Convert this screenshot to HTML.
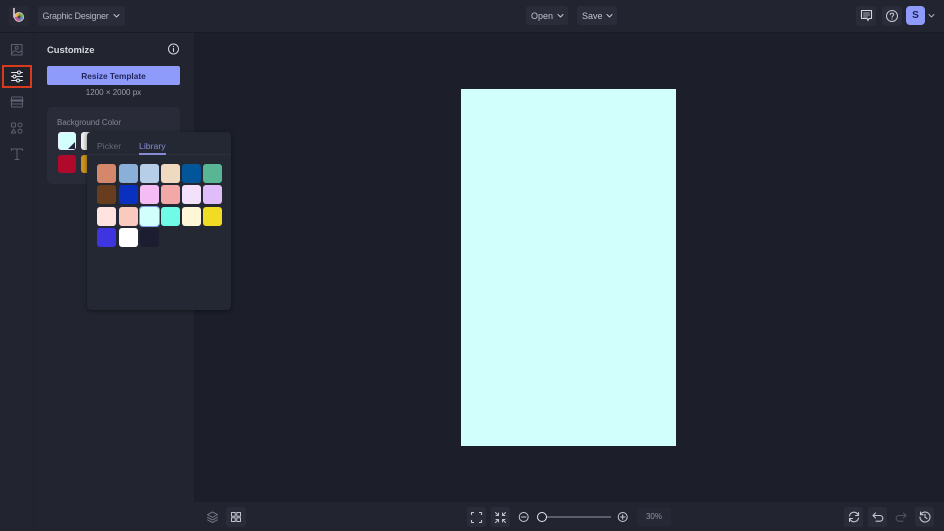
<!DOCTYPE html>
<html>
<head>
<meta charset="utf-8">
<style>
*{box-sizing:border-box;margin:0;padding:0}
html,body{width:944px;height:531px;overflow:hidden;background:#1c1e29;font-family:"Liberation Sans",sans-serif;color:#c9ccd6}
.a{position:absolute}
svg{position:absolute;fill:none;stroke-linecap:round;stroke-linejoin:round}
.btn{position:absolute;background:#2a2d39;border-radius:3px}
.s{position:absolute;width:19px;height:19px;border-radius:3px}
.t{position:absolute;white-space:nowrap}
</style>
</head>
<body>
<!-- top bar -->
<div class="a" style="left:0;top:0;width:944px;height:32px;background:#22252f"></div>
<div class="a" style="left:0;top:32px;width:944px;height:1px;background:#1a1c25"></div>
<!-- left rail -->
<div class="a" style="left:0;top:33px;width:33px;height:498px;background:#22252f"></div>
<div class="a" style="left:33px;top:33px;width:1px;height:498px;background:#1e212a"></div>
<!-- panel -->
<div class="a" style="left:34px;top:33px;width:160px;height:498px;background:#22252f"></div>
<!-- bottom bar -->
<div class="a" style="left:194px;top:502px;width:750px;height:29px;background:#22252f"></div>

<!-- logo -->
<div class="btn" style="left:9px;top:6px;width:20px;height:20px;background:#272a35"></div>
<svg style="left:9px;top:6px" width="20" height="20" viewBox="0 0 20 20">
<path d="M5 2.5V11" stroke="#e8e2e6" stroke-width="1.5"/>
<circle cx="10" cy="11" r="5" fill="#d9c3cf"/>
<circle cx="10" cy="11" r="4" fill="#e3b53d"/>
<path d="M10 11 L10 7 A4 4 0 0 1 14 11Z" fill="#6fae4d"/>
<path d="M10 11 L14 11 A4 4 0 0 1 10 15Z" fill="#5a8fc9"/>
<path d="M10 11 L10 15 A4 4 0 0 1 6 11Z" fill="#c65a9a"/>
<circle cx="10" cy="11" r="1.5" fill="#4a4048"/>
</svg>

<!-- Graphic Designer -->
<div class="btn" style="left:38px;top:6px;width:87px;height:20px"></div>
<div class="t" style="left:42.5px;top:10px;font-size:9px;letter-spacing:-.25px;line-height:12px;color:#b4b7c2">Graphic Designer</div>
<svg style="left:112px;top:13px" width="9" height="6" viewBox="0 0 9 6"><path d="M2 1.5L4.5 4L7 1.5" stroke="#c5c8d2" stroke-width="1"/></svg>

<!-- Open/Save -->
<div class="btn" style="left:526px;top:6px;width:42px;height:19px"></div>
<div class="t" style="left:531px;top:10px;font-size:9px;line-height:12px;color:#bfc2cc">Open</div>
<svg style="left:556px;top:13px" width="9" height="6" viewBox="0 0 9 6"><path d="M2 1.5L4.5 4L7 1.5" stroke="#c5c8d2" stroke-width="1"/></svg>
<div class="btn" style="left:577px;top:6px;width:40px;height:19px"></div>
<div class="t" style="left:582px;top:10px;font-size:9px;line-height:12px;color:#bfc2cc">Save</div>
<svg style="left:605px;top:13px" width="9" height="6" viewBox="0 0 9 6"><path d="M2 1.5L4.5 4L7 1.5" stroke="#c5c8d2" stroke-width="1"/></svg>

<!-- top right -->
<div class="btn" style="left:856px;top:6px;width:20px;height:20px"></div>
<svg style="left:860px;top:9px" width="13" height="13" viewBox="0 0 13 13"><path d="M1.5 1.5H11.5V9.5H9L8 11.5L7 9.5H1.5Z" stroke="#d5d7df" stroke-width="1.1"/><path d="M3.5 4H9.5M3.5 6H9.5M3.5 8H7.5" stroke="#d5d7df" stroke-width=".8"/></svg>
<div class="btn" style="left:882px;top:6px;width:20px;height:20px"></div>
<svg style="left:885px;top:9px" width="14" height="14" viewBox="0 0 14 14"><circle cx="7" cy="7" r="5.5" stroke="#c9ccd6" stroke-width="1"/><path d="M5.3 5.6C5.3 3.6 8.7 3.6 8.7 5.6C8.7 7 7 6.8 7 8.2" stroke="#c9ccd6" stroke-width="1"/><circle cx="7" cy="10" r=".6" fill="#c9ccd6"/></svg>
<div class="a" style="left:906px;top:6px;width:19px;height:19px;background:#8e9bfb;border-radius:4px"></div>
<div class="t" style="left:906px;top:9px;width:19px;text-align:center;font-size:10px;line-height:13px;font-weight:bold;color:#1d2150">S</div>
<svg style="left:927px;top:13px" width="9" height="6" viewBox="0 0 9 6"><path d="M2 1.5L4.5 4L7 1.5" stroke="#aeb1bd" stroke-width="1"/></svg>

<!-- rail icons -->
<svg style="left:9px;top:43px" width="15" height="14" viewBox="0 0 15 14"><rect x="2.5" y="1.5" width="10.5" height="10.5" stroke="#5c6070" stroke-width="1"/><circle cx="7.7" cy="4.8" r="1.5" stroke="#5c6070"/><path d="M3 10L6 7.5L9.5 9.5L12.5 8" stroke="#5c6070"/></svg>
<div class="a" style="left:2px;top:65px;width:30px;height:23px;border:2.5px solid #d93a1e;background:#1f222b"></div>
<svg style="left:9px;top:69px" width="16" height="15" viewBox="0 0 16 15"><path d="M2.5 3.5H13.5M2.5 7.5H13.5M2.5 11.5H13.5" stroke="#e4e5ea" stroke-width="1"/><circle cx="10" cy="3.5" r="1.5" fill="#1f222b" stroke="#e4e5ea"/><circle cx="5.5" cy="7.5" r="1.5" fill="#1f222b" stroke="#e4e5ea"/><circle cx="9" cy="11.5" r="1.5" fill="#1f222b" stroke="#e4e5ea"/></svg>
<svg style="left:9px;top:95px" width="15" height="14" viewBox="0 0 15 14"><rect x="2.5" y="2" width="11" height="10" rx=".5" stroke="#5c6070" stroke-width="1"/><path d="M2.5 5.5H13.5" stroke="#5c6070" stroke-width="2.2"/><path d="M2.5 9H13.5" stroke="#5c6070" stroke-width="1"/></svg>
<svg style="left:9px;top:121px" width="15" height="14" viewBox="0 0 15 14"><rect x="2.5" y="2" width="4" height="4" rx=".7" stroke="#5c6070"/><circle cx="11" cy="4" r="2" stroke="#5c6070"/><path d="M4.5 8L6.8 12H2.2Z" stroke="#5c6070"/><circle cx="11" cy="10.2" r="2" stroke="#5c6070"/></svg>
<svg style="left:9px;top:147px" width="15" height="14" viewBox="0 0 15 14"><path d="M2.5 3.5V2H13.5V3.5M8 2V12.5M6 12.5H10" stroke="#5c6070" stroke-width="1"/></svg>

<!-- panel content -->
<div class="t" style="left:47px;top:43px;font-size:9.4px;line-height:13px;font-weight:bold;color:#d6d8df">Customize</div>
<svg style="left:167px;top:43px" width="13" height="13" viewBox="0 0 13 13"><circle cx="6.5" cy="6" r="5" stroke="#d5d7df"/><path d="M6.5 5.5V8.5" stroke="#d5d7df" stroke-width="1.1"/><circle cx="6.5" cy="3.6" r=".6" fill="#d5d7df"/></svg>
<div class="a" style="left:47px;top:66px;width:133px;height:19px;background:#8e9bfb;border-radius:2px"></div>
<div class="t" style="left:47px;top:69.5px;width:133px;text-align:center;font-size:8.3px;line-height:12px;font-weight:bold;color:#23275c">Resize Template</div>
<div class="t" style="left:47px;top:86.5px;width:133px;text-align:center;font-size:8px;line-height:12px;color:#9c9fab">1200 × 2000 px</div>

<div class="a" style="left:47px;top:107px;width:133px;height:77px;background:#292c38;border-radius:5px"></div>
<div class="t" style="left:57px;top:117px;font-size:8px;line-height:11px;color:#858897">Background Color</div>
<div class="s" style="left:58px;top:132px;width:18px;height:18px;background:#d1fffb;border:1px solid #eef"></div>
<svg style="left:66px;top:140px" width="10" height="10" viewBox="0 0 10 10"><path d="M9 2V9H2Z" fill="#23263a"/></svg>
<div class="s" style="left:81px;top:132px;height:18px;background:linear-gradient(90deg,#f2f2f2,#b8b8bc)"></div>
<div class="s" style="left:58px;top:155px;width:18px;height:18px;background:#b0092c"></div>
<div class="s" style="left:81px;top:155px;height:18px;background:#cd931f"></div>

<!-- popup -->
<div class="a" style="left:87px;top:132px;width:144px;height:178px;background:#242833;border-radius:4px;box-shadow:0 1px 4px rgba(0,0,0,.45)"></div>
<div class="a" style="left:87px;top:154px;width:144px;height:1px;background:#2c303b"></div>
<div class="t" style="left:97px;top:140px;font-size:8.7px;line-height:12px;color:#666979">Picker</div>
<div class="t" style="left:139px;top:140px;font-size:8.7px;line-height:12px;color:#858cd4">Library</div>
<div class="a" style="left:139px;top:153px;width:27px;height:1.5px;background:#858cd4"></div>

<div class="s" style="left:97px;top:164px;background:#d5876c"></div>
<div class="s" style="left:118.5px;top:164px;background:#8aafd9"></div>
<div class="s" style="left:140px;top:164px;background:#b6cee8"></div>
<div class="s" style="left:161px;top:164px;background:#efdabf"></div>
<div class="s" style="left:182px;top:164px;background:#03559a"></div>
<div class="s" style="left:203px;top:164px;background:#58b694"></div>

<div class="s" style="left:97px;top:185px;background:#673d1e"></div>
<div class="s" style="left:118.5px;top:185px;background:#0a30c0"></div>
<div class="s" style="left:140px;top:185px;background:#f5bbf5"></div>
<div class="s" style="left:161px;top:185px;background:#f3a8a8"></div>
<div class="s" style="left:182px;top:185px;background:#f3e0fb"></div>
<div class="s" style="left:203px;top:185px;background:#e0bcf9"></div>

<div class="s" style="left:97px;top:207px;background:#ffe3e0"></div>
<div class="s" style="left:118.5px;top:207px;background:#fbcabf"></div>
<div class="s" style="left:140px;top:207px;background:#d1fffb;box-shadow:0 0 0 1px #7f9ae0"></div>
<div class="s" style="left:161px;top:207px;background:#6ffbe6"></div>
<div class="s" style="left:182px;top:207px;background:#fff6d8"></div>
<div class="s" style="left:203px;top:207px;background:#f0dc22"></div>

<div class="s" style="left:97px;top:228px;background:#3e35e0"></div>
<div class="s" style="left:118.5px;top:228px;background:#ffffff"></div>
<div class="s" style="left:140px;top:228px;background:#1c1d30"></div>

<!-- canvas -->
<div class="a" style="left:461px;top:89px;width:215px;height:357px;background:#d1fffb"></div>

<!-- bottom left -->
<svg style="left:205px;top:510px" width="15" height="15" viewBox="0 0 15 15"><path d="M7.5 2L12.5 4.7L7.5 7.4L2.5 4.7Z" stroke="#6f7383"/><path d="M2.5 7.3L7.5 10L12.5 7.3M2.5 9.8L7.5 12.5L12.5 9.8" stroke="#6f7383"/></svg>
<div class="btn" style="left:226px;top:507px;width:20px;height:20px"></div>
<svg style="left:229px;top:510px" width="14" height="14" viewBox="0 0 14 14"><rect x="2.5" y="2.5" width="3.7" height="3.7" stroke="#c4c6cf"/><rect x="7.8" y="2.5" width="3.7" height="3.7" stroke="#c4c6cf"/><rect x="2.5" y="7.8" width="3.7" height="3.7" stroke="#c4c6cf"/><rect x="7.8" y="7.8" width="3.7" height="3.7" stroke="#c4c6cf"/></svg>

<!-- bottom center -->
<div class="btn" style="left:467px;top:507px;width:19px;height:20px"></div>
<svg style="left:470px;top:511px" width="13" height="13" viewBox="0 0 13 13"><path d="M1.5 4V1.5H4M9 1.5H11.5V4M11.5 9V11.5H9M4 11.5H1.5V9" stroke="#c4c6cf" stroke-width="1.1" stroke-linecap="butt"/></svg>
<div class="btn" style="left:491px;top:507px;width:19px;height:20px"></div>
<svg style="left:494px;top:511px" width="13" height="13" viewBox="0 0 13 13"><path d="M1.5 1.5L4.5 4.5M4.5 2V4.5H2M11.5 1.5L8.5 4.5M8.5 2V4.5H11M1.5 11.5L4.5 8.5M4.5 11V8.5H2M11.5 11.5L8.5 8.5M8.5 11V8.5H11" stroke="#c4c6cf"/></svg>
<svg style="left:517px;top:510px" width="14" height="14" viewBox="0 0 14 14"><circle cx="6.7" cy="7" r="4.5" stroke="#c9ccd6"/><path d="M4.5 7H9" stroke="#c9ccd6"/></svg>
<div class="a" style="left:537px;top:516px;width:74px;height:1.5px;background:#5a5e6c"></div>
<div class="a" style="left:537px;top:512px;width:10px;height:10px;border:1.5px solid #e8e9ee;border-radius:50%;background:#22252f"></div>
<svg style="left:616px;top:510px" width="14" height="14" viewBox="0 0 14 14"><circle cx="6.7" cy="7" r="4.5" stroke="#c9ccd6"/><path d="M4.5 7H9M6.7 4.7V9.3" stroke="#c9ccd6"/></svg>
<div class="a" style="left:637px;top:508px;width:34px;height:18px;background:#262935;border-radius:2px"></div>
<div class="t" style="left:637px;top:512px;width:34px;text-align:center;font-size:8px;line-height:10px;color:#8f92a0">30%</div>

<!-- bottom right -->
<div class="btn" style="left:844px;top:507px;width:19px;height:20px"></div>
<svg style="left:847px;top:510px" width="14" height="14" viewBox="0 0 14 14"><path d="M2.5 6A4.5 4.5 0 0 1 10.5 4L11.5 5.5M11.5 8A4.5 4.5 0 0 1 3.5 10L2.5 8.5M11.5 2.5V5.5H8.5M2.5 11.5V8.5H5.5" stroke="#c4c6cf" stroke-width="1.1"/></svg>
<div class="btn" style="left:868px;top:507px;width:19px;height:20px"></div>
<svg style="left:871px;top:511px" width="14" height="13" viewBox="0 0 14 13"><path d="M4.5 2L2 4.5L4.5 7M2 4.5H9A2.8 2.8 0 0 1 9 10.2H5" stroke="#c4c6cf" stroke-width="1.1"/></svg>
<svg style="left:894px;top:511px" width="14" height="13" viewBox="0 0 14 13"><path d="M9.5 2L12 4.5L9.5 7M12 4.5H5A2.8 2.8 0 0 0 5 10.2H9" stroke="#4f5260" stroke-width="1.1"/></svg>
<div class="btn" style="left:915px;top:507px;width:19px;height:20px"></div>
<svg style="left:918px;top:510px" width="14" height="14" viewBox="0 0 14 14"><path d="M2.7 4.5A5 5 0 1 1 2 7M2.5 2V4.7H5.2M7 4.3V7.2L9 8.5" stroke="#c4c6cf" stroke-width="1.1"/></svg>
</body>
</html>
